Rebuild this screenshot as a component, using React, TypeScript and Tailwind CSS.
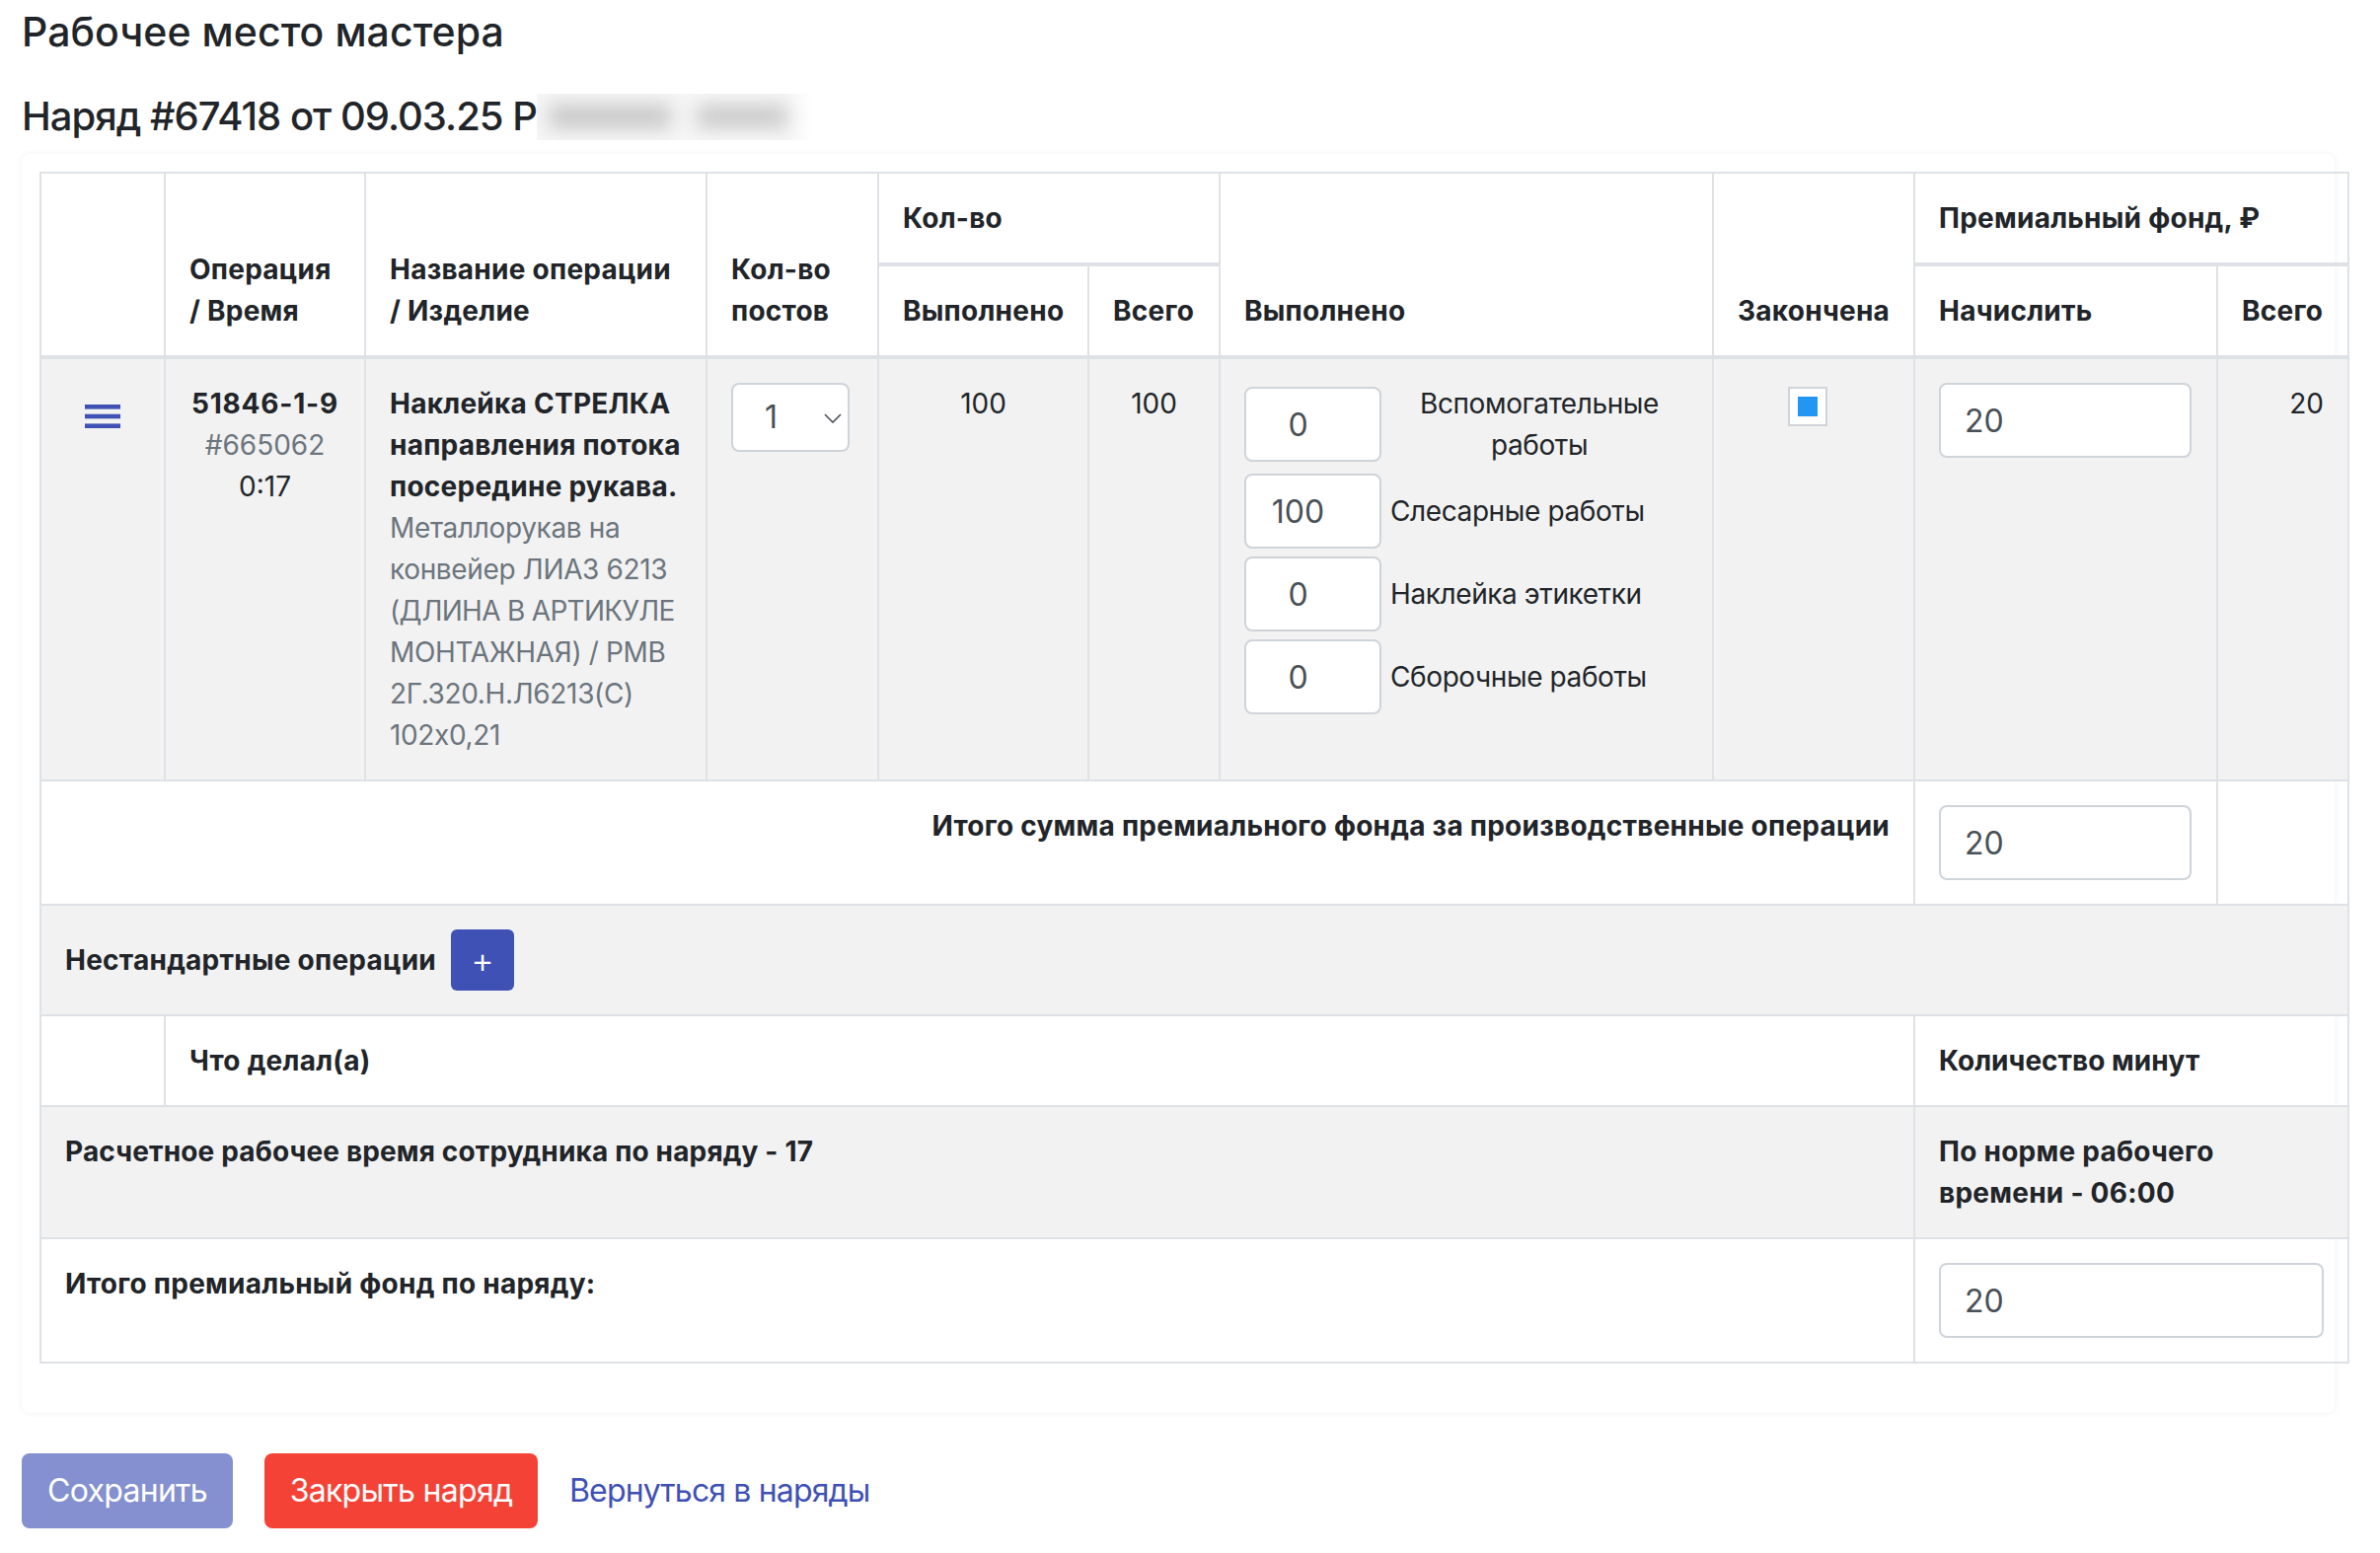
import React from "react";

const Input = ({ value, className }: { value: string; className: string }) => (
  <input
    readOnly
    value={value}
    className={`block h-[76px] rounded-lg border-2 border-[#ced4da] bg-white px-6 text-[32px] leading-[48px] text-[#495057] outline-none ${className}`}
  />
);

const Work = ({ value, label, center }: { value: string; label: string; center?: boolean }) => (
  <div className="mb-2 flex items-center gap-[9px]">
    <input
      readOnly
      value={value}
      className="h-[76px] w-[139px] shrink-0 rounded-lg border-2 border-[#ced4da] bg-white pr-[30px] text-center text-[32px] text-[#495057] outline-none"
    />
    <span className={`flex-1 tracking-[-0.4px] ${center ? "text-center" : ""}`}>{label}</span>
  </div>
);

const th = "border-2 border-[#dee2e6] p-6 text-left align-bottom font-bold tracking-[0.25px] whitespace-nowrap";
const td = "border-2 border-[#dee2e6] p-6 align-top";
const strong = "font-bold tracking-[0.25px]";

export default function App() {
  return (
    <div className="min-h-[1574px] bg-white pl-[22px] pr-[46px] pt-[8px] text-[28px] leading-[42px] text-[#212529] [font-family:Inter,'Noto_Sans',sans-serif]">
      <h1 className="text-[41px] font-medium leading-[48px] tracking-[0.05px]">Рабочее место мастера</h1>
      <h2 className="mt-[38px] flex h-[48px] items-center text-[40px] font-medium leading-[48px] tracking-[-1px]">
        Наряд #67418 от 09.03.25 Р
        <span className="flex h-[47px] w-[280px] items-center gap-[26px] overflow-hidden bg-linear-to-r from-[#f7f7f7] via-[#f7f7f7] via-90% to-white pl-[12px]">
          <span className="h-[24px] w-[124px] bg-[#c6c6c6] blur-[10px]" />
          <span className="h-[22px] w-[92px] bg-[#c6c6c6] blur-[10px]" />
        </span>
      </h2>
      <div className="mt-[14px] rounded-lg bg-white pb-[50px] pl-[18px] pt-[18px] shadow-[0_0_6px_rgba(0,0,0,0.06)]">
        <table className="w-[2339px] table-fixed border-collapse">
          <colgroup>
            <col className="w-[126px]" />
            <col className="w-[203px]" />
            <col className="w-[346px]" />
            <col className="w-[174px]" />
            <col className="w-[213px]" />
            <col className="w-[133px]" />
            <col className="w-[500px]" />
            <col className="w-[204px]" />
            <col className="w-[307px]" />
            <col className="w-[133px]" />
          </colgroup>
          <thead>
            <tr>
              <th rowSpan={2} className={th} />
              <th rowSpan={2} className={th}>Операция<br />/ Время</th>
              <th rowSpan={2} className={th}>Название операции<br />/ Изделие</th>
              <th rowSpan={2} className={th}>Кол-во<br />постов</th>
              <th colSpan={2} className={`${th} border-b-4`}>Кол-во</th>
              <th rowSpan={2} className={th}>Выполнено</th>
              <th rowSpan={2} className={`${th} pr-0`}>Закончена</th>
              <th colSpan={2} className={`${th} border-b-4`}>Премиальный фонд, ₽</th>
            </tr>
            <tr>
              <th className={th}>Выполнено</th>
              <th className={th}>Всего</th>
              <th className={th}>Начислить</th>
              <th className={th}>Всего</th>
            </tr>
          </thead>
          <tbody>
            <tr className="bg-[#f2f2f2]">
              <td className={`${td} border-t-4 pt-[46px]`}>
                <svg width="36" height="24" viewBox="0 0 36 24" className="mx-auto block" fill="#3f51b5">
                  <rect x="0" y="0" width="36" height="4.6" />
                  <rect x="0" y="9.7" width="36" height="4.6" />
                  <rect x="0" y="19.4" width="36" height="4.6" />
                </svg>
              </td>
              <td className={`${td} border-t-4 text-center`}>
                <div className="font-bold tracking-[0.8px]">51846-1-9</div>
                <div className="text-[#6c757d]">#665062</div>
                <div>0:17</div>
              </td>
              <td className={`${td} border-t-4 whitespace-nowrap`}>
                <div className={strong}>Наклейка СТРЕЛКА<br />направления потока<br />посередине рукава.</div>
                <div className="tracking-[-0.35px] text-[#6c757d]">
                  Металлорукав на<br />конвейер ЛИАЗ 6213<br />
                  <span className="tracking-[-0.7px]">(ДЛИНА В АРТИКУЛЕ</span><br />
                  МОНТАЖНАЯ) / РМВ<br />2Г.320.Н.Л6213(С)<br />102х0,21
                </div>
              </td>
              <td className={`${td} border-t-4`}>
                <div className="relative h-[70px] w-[120px]">
                  <select className="h-full w-full appearance-none rounded-lg border-2 border-[#ced4da] bg-white pl-[32px] text-[32px] text-[#495057] outline-none">
                    <option>1</option>
                  </select>
                  <svg width="18" height="10" viewBox="0 0 18 10" fill="none" stroke="#495057" strokeWidth="1.6" className="pointer-events-none absolute right-[8px] top-[31px]">
                    <path d="M1 1l8 8 8-8" />
                  </svg>
                </div>
              </td>
              <td className={`${td} border-t-4 text-center`}>100</td>
              <td className={`${td} border-t-4 text-center`}>100</td>
              <td className={`${td} border-t-4`}>
                <Work value="0" label="Вспомогательные работы" center />
                <Work value="100" label="Слесарные работы" />
                <Work value="0" label="Наклейка этикетки" />
                <Work value="0" label="Сборочные работы" />
              </td>
              <td className={`${td} border-t-4 pt-[28px]`}>
                <div className="ml-[51px] flex h-[40px] w-[40px] items-center justify-center border-2 border-[#ced4da] bg-white">
                  <div className="h-[20px] w-[20px] bg-[#2196f3]" />
                </div>
              </td>
              <td className={`${td} border-t-4`}>
                <Input value="20" className="w-[256px]" />
              </td>
              <td className={`${td} border-t-4 text-right`}>20</td>
            </tr>
            <tr>
              <td colSpan={8} className={`${td} text-right ${strong}`}>Итого сумма премиального фонда за производственные операции</td>
              <td className={td}><Input value="20" className="w-[256px]" /></td>
              <td className={td} />
            </tr>
            <tr className="bg-[#f2f2f2]">
              <td colSpan={10} className={`${td} ${strong}`}>
                <div className="flex items-center gap-[15px]">
                  <span>Нестандартные операции</span>
                  <span className="flex h-[62px] w-[64px] items-center justify-center rounded-md bg-[#3f51b5] text-[36px] font-light text-white">+</span>
                </div>
              </td>
            </tr>
            <tr>
              <td className={td} />
              <td colSpan={7} className={`${td} ${strong}`}>Что делал(а)</td>
              <td colSpan={2} className={`${td} font-bold`}>Количество минут</td>
            </tr>
            <tr className="bg-[#f2f2f2]">
              <td colSpan={8} className={`${td} font-bold tracking-[0.15px]`}>Расчетное рабочее время сотрудника по наряду - 17</td>
              <td colSpan={2} className={`${td} ${strong}`}>По норме рабочего<br />времени - 06:00</td>
            </tr>
            <tr>
              <td colSpan={8} className={`${td} ${strong}`}>Итого премиальный фонд по наряду:</td>
              <td colSpan={2} className={td}><Input value="20" className="w-full" /></td>
            </tr>
          </tbody>
        </table>
      </div>
      <div className="mt-[41px] flex items-center text-[32px] leading-[48px] tracking-[-0.7px]">
        <button className="h-[76px] w-[214px] rounded-lg bg-[#8490cf] text-white">Сохранить</button>
        <button className="ml-[32px] h-[76px] w-[277px] rounded-lg bg-[#f44336] text-white">Закрыть наряд</button>
        <a className="ml-[32px] tracking-[-0.85px] text-[#3f51b5]">Вернуться в наряды</a>
      </div>
    </div>
  );
}
